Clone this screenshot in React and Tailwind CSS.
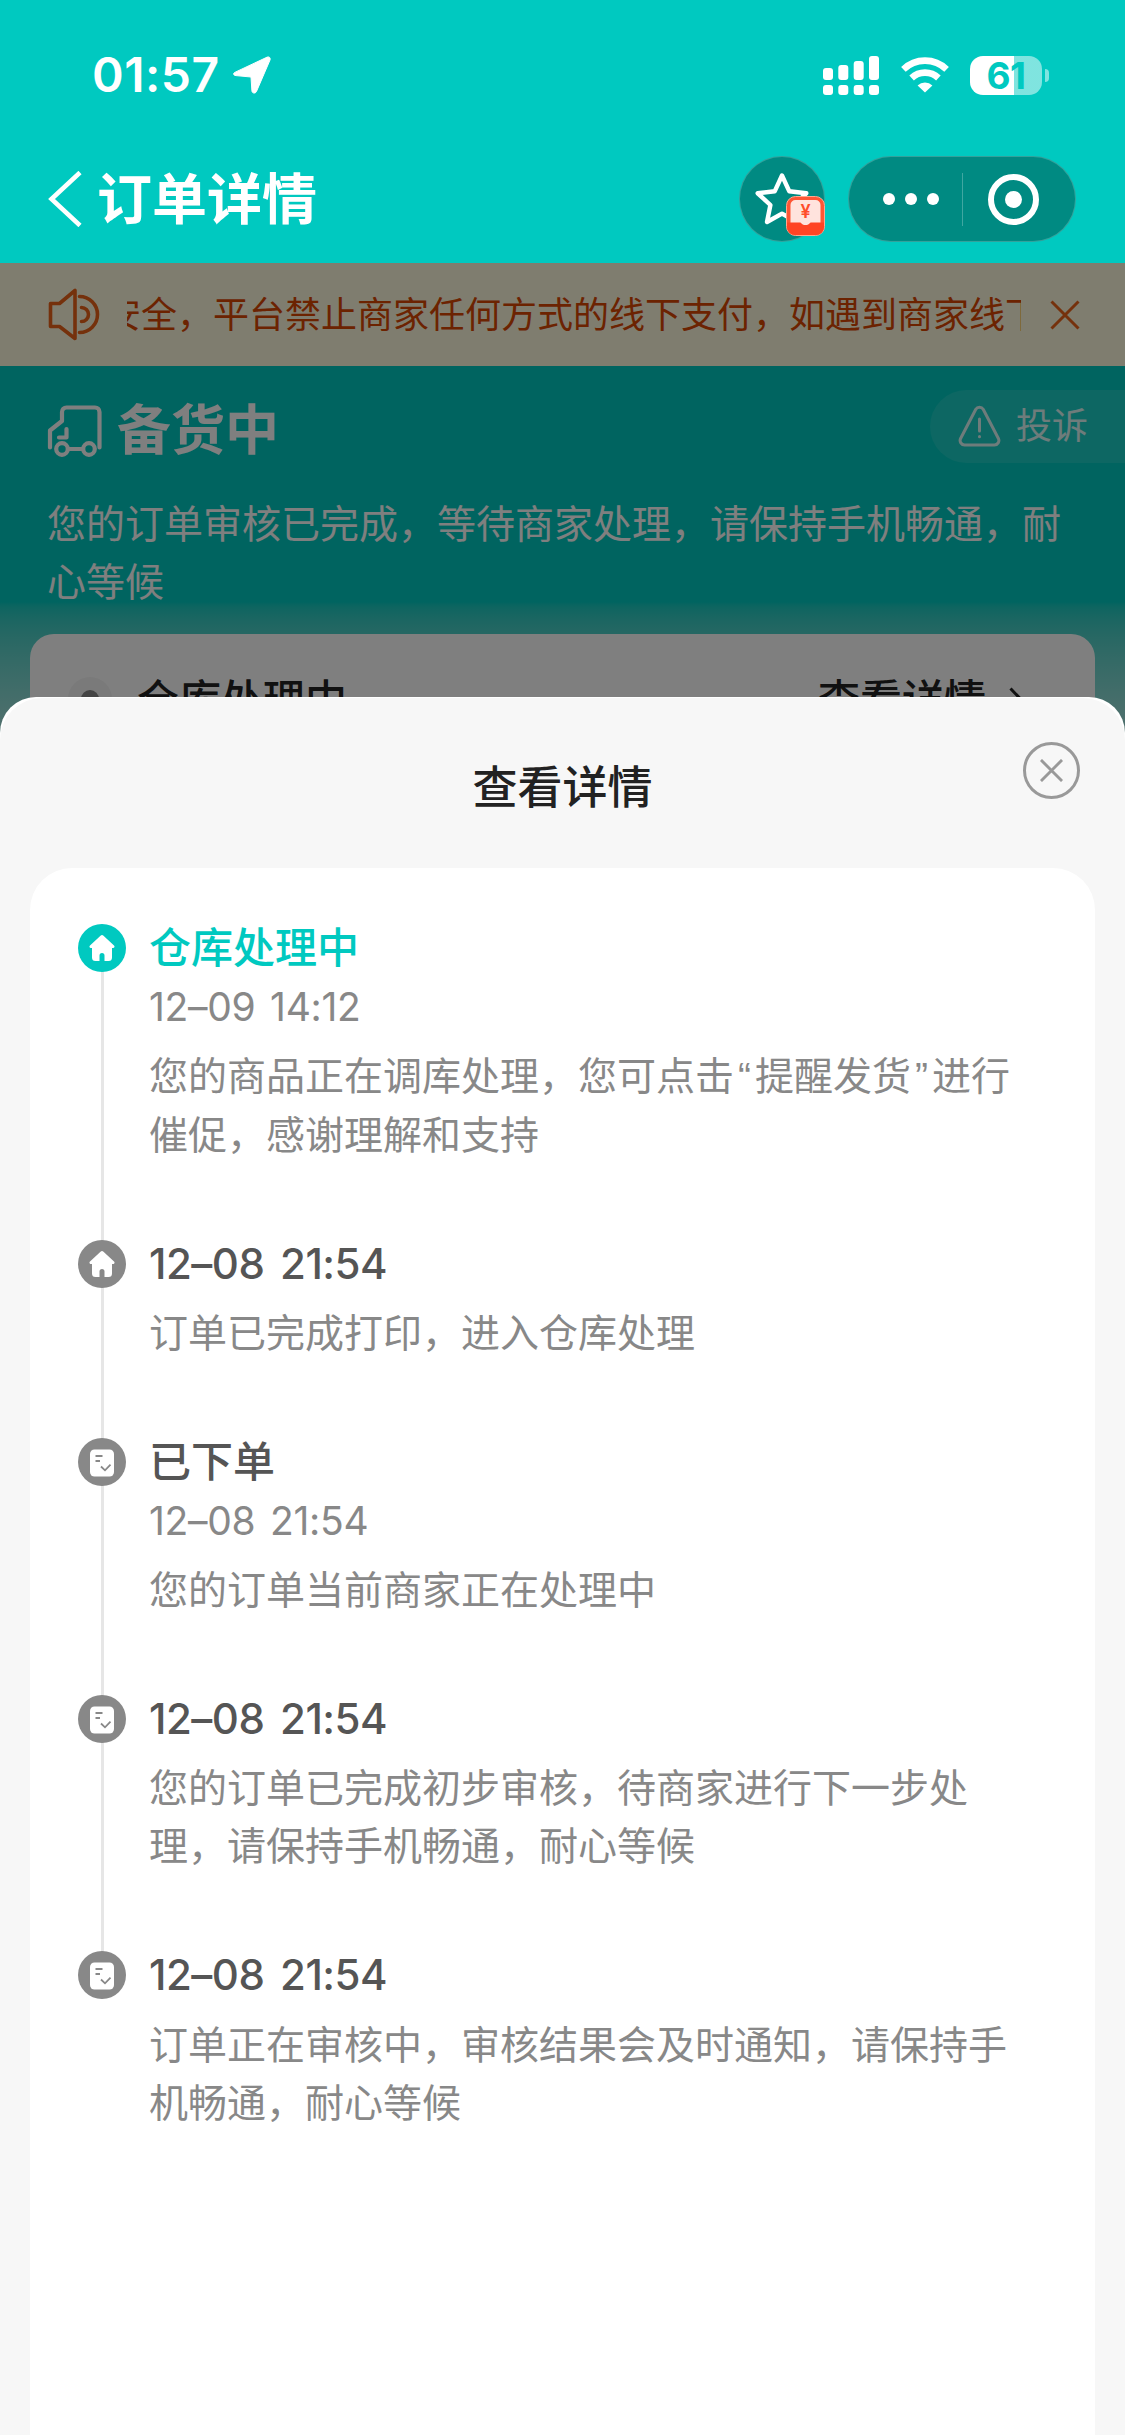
import clsx from 'clsx';

const steps = [
    {
        icon: 'home',
        active: true,
        title: '仓库处理中',
        time: '12–09 14:12',
        desc: '您的商品正在调库处理，您可点击“提醒发货”进行催促，感谢理解和支持',
    },
    { icon: 'home', title: '12–08 21:54', desc: '订单已完成打印，进入仓库处理' },
    { icon: 'order', title: '已下单', time: '12–08 21:54', desc: '您的订单当前商家正在处理中' },
    { icon: 'order', title: '12–08 21:54', desc: '您的订单已完成初步审核，待商家进行下一步处理，请保持手机畅通，耐心等候' },
    { icon: 'order', title: '12–08 21:54', desc: '订单正在审核中，审核结果会及时通知，请保持手机畅通，耐心等候' },
];

function StatusBar() {
    return (
        <div className="flex h-[150px] items-center justify-between pl-[92px] pr-[76px]">
            <div className="flex items-center">
                <span className="w-[141px] text-[48px] leading-none font-semibold tracking-[0.5px]">01:57</span>
                <svg className="h-[38px] w-[38px]" viewBox="0 0 38 38" fill="currentColor" stroke="currentColor" strokeLinejoin="round">
                    <path d="M2.2 16.2 34 1.2c2-1 3.8.6 3 2.8L23.5 35.4c-1 2.4-4.4 2.2-4.6-.6L18 21 3 19.6c-3-.4-3.2-2.400-.8-3.400z" />
                </svg>
            </div>
            <div className="flex items-center">
                <svg className="mr-[21px] h-[39px] w-[57px]" viewBox="0 0 57 39" fill="currentColor">
                    <rect x="0" y="12" width="10" height="12" rx="3" />
                    <rect x="15.3" y="9" width="10" height="15" rx="3" />
                    <rect x="30.7" y="5" width="10" height="19" rx="3" />
                    <rect x="46" y="0" width="10" height="24" rx="3" />
                    <rect x="0" y="29" width="10" height="10" rx="3" />
                    <rect x="15.3" y="29" width="10" height="10" rx="3" />
                    <rect x="30.7" y="29" width="10" height="10" rx="3" />
                    <rect x="46" y="29" width="10" height="10" rx="3" />
                </svg>
                <svg className="mr-[21px] h-[36px] w-[48px]" viewBox="0 0 48 36" fill="none" stroke="currentColor" strokeWidth="6.6">
                    <path d="M2.4 12.4a31 31 0 0 1 43.2 0" />
                    <path d="M10.6 21a19.4 19.4 0 0 1 26.8 0" />
                    <path d="M24 35.6 16.6 28.4a10.6 10.6 0 0 1 14.8 0z" fill="currentColor" stroke="none" />
                </svg>
                <div className="flex items-center">
                    <div className="flex h-[39px] w-[72px] items-center justify-center rounded-[13px] bg-linear-to-r from-white from-61% to-white/50 to-61%">
                        <span className="text-[37px] leading-none font-bold tracking-[-0.5px] text-[#00c9c0]">61</span>
                    </div>
                    <div className="ml-[3px] h-[13px] w-[4px] rounded-r-full bg-white/50" />
                </div>
            </div>
        </div>
    );
}

function NavBar() {
    return (
        <div className="flex h-[98px] items-center pr-[49px] pl-[48px]">
            <svg className="h-[56px] w-[34px]" viewBox="0 0 34 56" fill="none" stroke="currentColor" strokeWidth="4.6">
                <path d="M32 1.5 3.5 28 32 54.5" />
            </svg>
            <h1 className="ml-[15px] text-[55px] leading-none font-bold">订单详情</h1>
            <div className="relative mr-px ml-auto flex h-[86px] w-[86px] items-center justify-center rounded-full border border-white/20 bg-[#008a82]">
                <svg className="h-[54px] w-[54px]" viewBox="0 0 54 54" fill="none" stroke="currentColor" strokeWidth="4.4" strokeLinejoin="round">
                    <path d="M27 3.500 34.200 19.200 51.300 21.300 38.600 33 42 50 27 41.600 12 50 15.400 33 2.700 21.300 19.800 19.200z" />
                </svg>
                <div className="absolute top-[39px] left-[46px] h-[40px] w-[39px]">
                    <svg className="h-full w-full" viewBox="0 0 39 40">
                        <rect x="0.5" y="0.5" width="38" height="39" rx="9" fill="#fe5635" stroke="#ffa78e" />
                        <path d="M4.500 27V9a5 5 0 0 1 5-5h20a5 5 0 0 1 5 5v18H24c-1 3-8 3-9 0z" fill="#ffe3dd" />
                        <path d="M1 26.500h13.500c1.500 3.400 8.500 3.400 10 0H38V31a8 8 0 0 1-8 8H9a8 8 0 0 1-8-8z" fill="#ff4424" />
                    </svg>
                    <span className="absolute inset-x-0 top-[7px] text-center text-[18px] leading-[18px] font-semibold text-[#ff4d2b]">¥</span>
                </div>
            </div>
            <div className="ml-[22px] flex h-[86px] w-[228px] items-center rounded-full border border-white/20 bg-[#008a82]">
                <div className="flex w-[113px] justify-center gap-[10px] pl-[11px]">
                    <span className="h-3 w-3 rounded-full bg-white" />
                    <span className="h-3 w-3 rounded-full bg-white" />
                    <span className="h-3 w-3 rounded-full bg-white" />
                </div>
                <div className="h-[53px] w-px bg-white/25" />
                <div className="ml-[25px] flex h-[51px] w-[51px] items-center justify-center rounded-full border-[6px] border-white">
                    <span className="h-[17px] w-[17px] rounded-full bg-white" />
                </div>
            </div>
        </div>
    );
}

function Notice() {
    return (
        <div className="flex h-[103px] items-center bg-[#fffbdf] pl-[48px] text-[#ea6318]">
            <svg className="h-[54px] w-[52px]" viewBox="0 0 52 54" fill="none" stroke="currentColor" strokeWidth="3.600" strokeLinecap="round" strokeLinejoin="round">
                <path d="M2.500 15.500h9L27 2.500v48L11.500 38.500h-9z" />
                <path d="M31.500 8.500a18 18 0 0 1 0 36" />
                <path d="M33.500 19.500a7 7 0 0 1 0 14" />
            </svg>
            <div className="ml-[27px] w-[894px] overflow-hidden text-[#d94602]">
                <p className="-ml-[22px] text-[36px] leading-[54px] whitespace-nowrap">
                    安全，平台禁止商家任何方式的线下支付，如遇到商家线下支付
                </p>
            </div>
            <svg className="ml-[29px] h-[30px] w-[30px]" viewBox="0 0 30 30" fill="none" stroke="currentColor" strokeWidth="3">
                <path d="m1.500 1.500 27 27m0-27-27 27" />
            </svg>
        </div>
    );
}

function OrderStatus() {
    return (
        <div className="h-[700px] bg-linear-to-b from-[#00c9c0] from-[236px] to-[#f7f7f7] to-[490px] text-white">
            <div className="flex h-[121px] items-center pt-[1px] pl-[47px]">
                <svg className="mt-[7px] h-[54px] w-[55px]" viewBox="0 0 55 54" fill="none" stroke="currentColor" strokeWidth="4.200" strokeLinecap="round" strokeLinejoin="round">
                    <path d="M3 43.500V26.500L15 17V8a4.500 4.500 0 0 1 4.500-4.500h28.500a4.500 4.500 0 0 1 4.500 4.500v35.500" />
                    <path d="M19.500 25v8.500h-7.500" />
                    <circle cx="15" cy="45" r="5.800" />
                    <circle cx="42" cy="45" r="5.800" />
                    <path d="M21 45h15" />
                </svg>
                <h2 className="mt-[8px] ml-[15px] text-[54px] leading-none font-bold">备货中</h2>
                <div className="mt-[-2px] ml-auto flex h-[73px] w-[195px] items-center rounded-l-full bg-white/10 pl-[28px] text-white/85">
                    <svg className="h-[42px] w-[43px]" viewBox="0 0 43 42" fill="none" stroke="currentColor" strokeWidth="3" strokeLinecap="round" strokeLinejoin="round">
                        <path d="M17.800 4.300a4.300 4.300 0 0 1 7.400 0L40.400 33.500a4.500 4.500 0 0 1-4 6.500H6.600a4.500 4.500 0 0 1-4-6.500z" />
                        <path d="M21.500 14v12M21.500 31.500v.3" />
                    </svg>
                    <span className="ml-[15px] text-[36px] leading-none">投诉</span>
                </div>
            </div>
            <p className="mt-[8px] pr-[48px] pl-[47px] text-[39px] leading-[58px]">
                您的订单审核已完成，等待商家处理，请保持手机畅通，耐心等候
            </p>
            <div className="mx-[30px] mt-[23px] flex h-[300px] items-start rounded-[24px] bg-white pt-[37px] pr-[71px] pl-[38px] text-[#222]">
                <span className="mt-[6px] flex h-[44px] w-[44px] items-center justify-center rounded-full bg-[#f4f4f4]">
                    <span className="h-[18px] w-[18px] rounded-full bg-[#888]" />
                </span>
                <span className="ml-[25px] text-[42px] leading-[58px] font-medium">仓库处理中</span>
                <span className="ml-auto text-[42px] leading-[58px] font-medium">查看详情</span>
                <svg className="mt-[16px] ml-[23px] h-[28px] w-[15px]" viewBox="0 0 15 28" fill="none" stroke="currentColor" strokeWidth="3">
                    <path d="m1.500 1.500 12 12.500-12 12.500" />
                </svg>
            </div>
        </div>
    );
}

function StepIcon({ type, active }) {
    return (
        <div className={clsx('relative flex h-12 w-12 items-center justify-center rounded-full', active ? 'bg-[#00c9c0]' : 'bg-[#888]')}>
            {type === 'home' ? (
                <svg className="h-[28px] w-[28px]" viewBox="0 0 28 28" fill="#fff">
                    <path d="M12.500 1.800a2.200 2.200 0 0 1 3 0L26 11.600c1 1 .6 2.400-1 2.400h-1v9.500a3.500 3.500 0 0 1-3.500 3.500h-4v-5.500a2.500 2.500 0 0 0-5 0V27h-4A3.500 3.500 0 0 1 4 23.500V14H3c-1.600 0-2-1.400-1-2.400z" />
                </svg>
            ) : (
                <svg className="mt-[2px] h-[28px] w-[26px]" viewBox="0 0 26 28" fill="none" stroke="#888" strokeWidth="1.800">
                    <rect x="1" y="0.500" width="24" height="27" rx="4.500" fill="#fff" stroke="none" />
                    <path d="M6.500 7h7M6.500 12h4.500" />
                    <path d="m12 17.500 4 3.800 5.500-5.600" />
                </svg>
            )}
        </div>
    );
}

// curly quotes sit in a narrow latin face between the CJK glyphs
function Desc({ text }) {
    return text.split(/([“”])/).map((part, i) =>
        i % 2 ? (
            <span key={i} className="px-[4px] font-['Liberation_Sans']">{part}</span>
        ) : (
            part
        )
    );
}

function Step({ step, last }) {
    return (
        <li className="relative flex">
            {!last && <div className="absolute top-[29px] left-[22.5px] h-full w-[3px] bg-[#e6e6e6]" />}
            <div className="pt-[5px]">
                <StepIcon type={step.icon} active={step.active} />
            </div>
            <div className="ml-[23px] w-[869px] pb-[71px]">
                <h3
                    className={clsx(
                        'text-[42px] leading-[58.5px] font-medium',
                        step.active ? 'text-[#00c9c0]' : 'text-[#555]',
                        !step.time && 'tracking-[-0.5px] [word-spacing:5px]'
                    )}
                >
                    {step.title}
                </h3>
                {step.time && <div className="text-[39px] leading-[58px] tracking-[-0.3px] text-[#888] [word-spacing:4px]">{step.time}</div>}
                <p className="mt-[11px] text-[39px] leading-[58px] text-[#888]">
                    <Desc text={step.desc} />
                </p>
            </div>
        </li>
    );
}

function DetailSheet() {
    return (
        <div className="absolute inset-x-0 top-[697px] bottom-0 rounded-t-[36px] bg-white">
            <div className="relative mt-px flex h-full flex-col rounded-t-[42px] bg-[#f7f7f7] pt-[60px]">
                <h2 className="text-center text-[45px] leading-[60px] font-medium text-[#222]">查看详情</h2>
                <button className="absolute top-[44px] right-[45px] flex h-[57px] w-[57px] items-center justify-center rounded-full border-[3px] border-[#999]">
                    <svg className="h-[23px] w-[23px]" viewBox="0 0 24 24" fill="none" stroke="#999" strokeWidth="3">
                        <path d="m1 1 22 22m0-22L1 23" />
                    </svg>
                </button>
                <ul className="mx-[30px] mt-[50px] grow rounded-t-[42px] bg-white pt-[51px] pl-[48px]">
                    {steps.map((step, i) => (
                        <Step key={i} step={step} last={i === steps.length - 1} />
                    ))}
                </ul>
            </div>
        </div>
    );
}

export default function App() {
    return (
        <div lang="zh-CN" className="relative h-[2435px] w-[1125px] overflow-hidden bg-[#f7f7f7] font-['Inter','Noto_Sans_CJK_SC',sans-serif]">
            <header className="h-[263px] bg-[#00c9c0] text-white">
                <StatusBar />
                <NavBar />
            </header>
            <main>
                <Notice />
                <OrderStatus />
            </main>
            <div className="absolute inset-x-0 top-[263px] bottom-0 bg-black/50" />
            <DetailSheet />
        </div>
    );
}
